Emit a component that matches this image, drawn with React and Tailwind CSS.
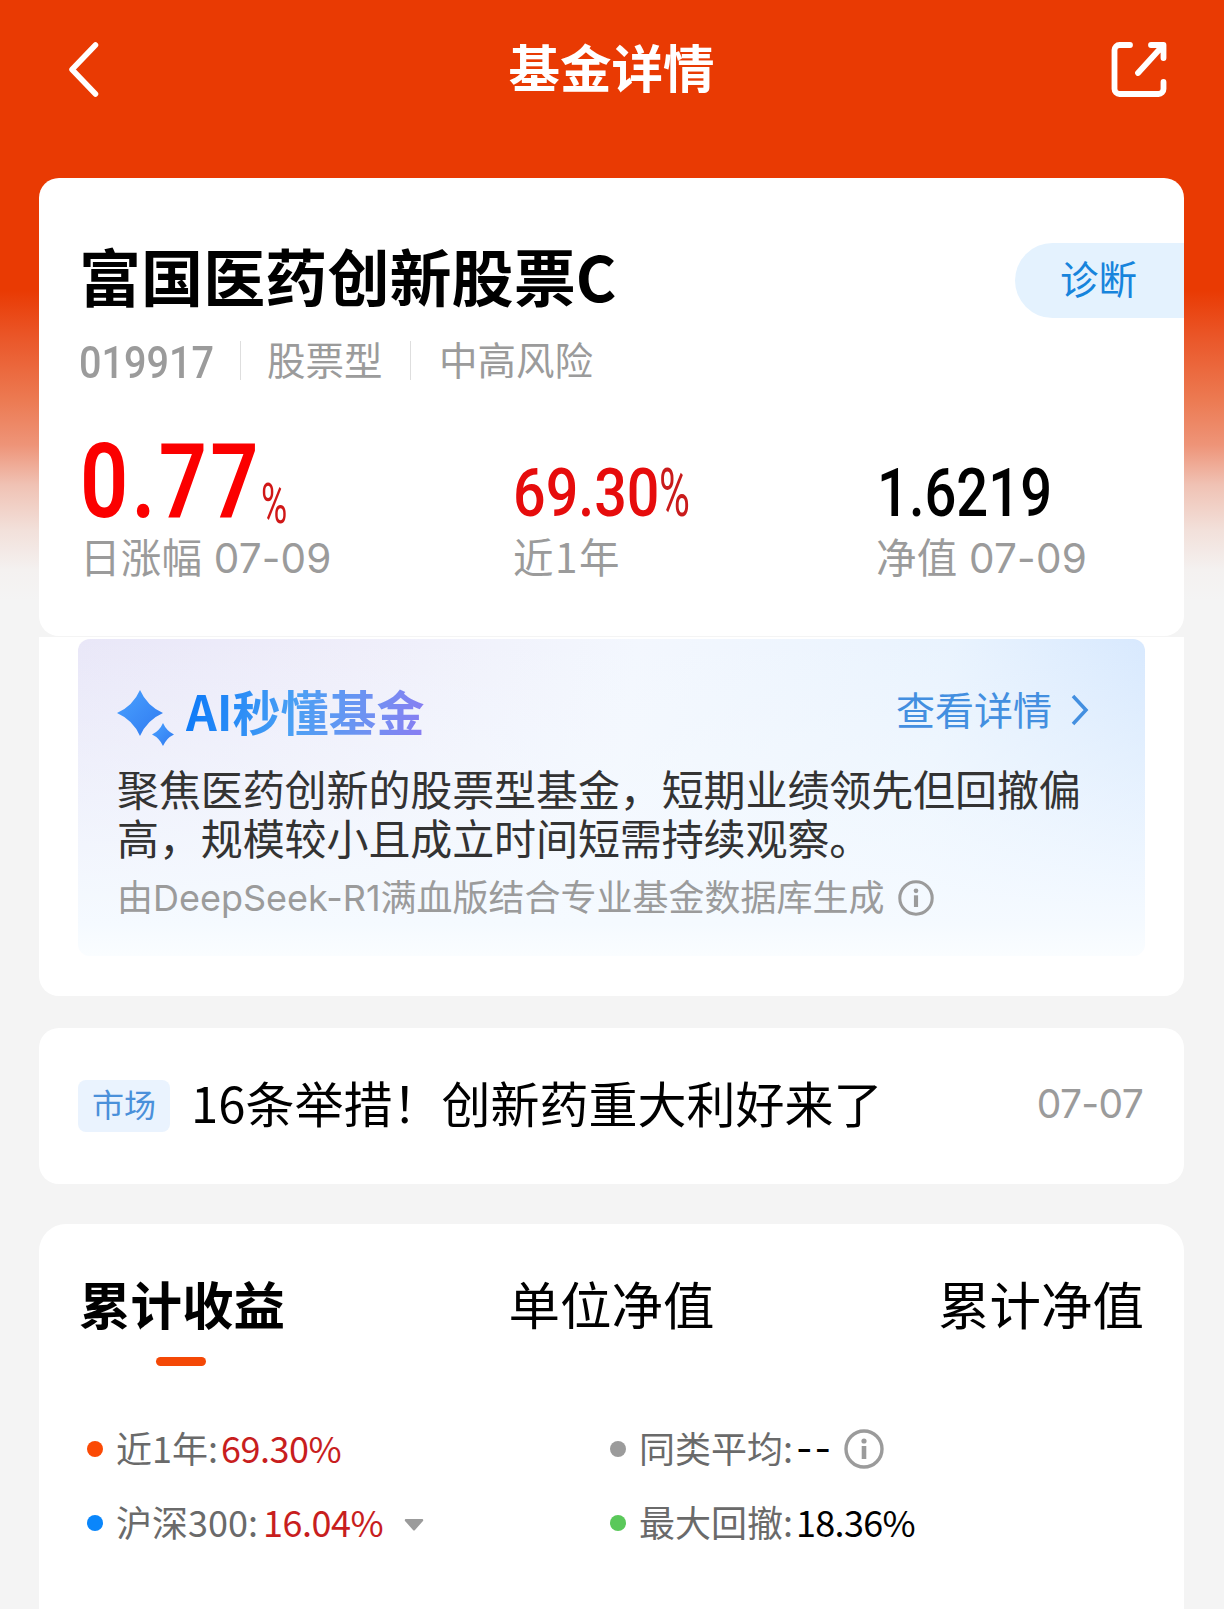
import React from 'react';

const InfoIcon = ({ className }) => (
  <svg viewBox="0 0 40 40" fill="none" className={className}>
    <circle cx="20" cy="20" r="18" stroke="#9b9b9b" strokeWidth="3.4" />
    <circle cx="20" cy="12" r="2.6" fill="#9b9b9b" />
    <path d="M20 17v13" stroke="#9b9b9b" strokeWidth="4.6" />
  </svg>
);

const Header = () => (
  <header className="h-[178px] px-[67px] pt-[41px] flex justify-between items-start text-white">
    <svg viewBox="0 0 32 58" fill="none" className="w-8 h-[58px]">
      <path d="M28.500 4 5 28.500 28.500 53" stroke="currentColor" strokeWidth="5.500" strokeLinecap="round" strokeLinejoin="round" />
    </svg>
    <h1 className="text-[51.500px] leading-[50px] font-bold ml-[14px]">基金详情</h1>
    <svg viewBox="0 0 58 58" fill="none" className="w-[58px] h-[58px] -mr-[11px]">
      <g stroke="currentColor" strokeWidth="5.800" strokeLinecap="round" strokeLinejoin="round">
        <path d="M20 4H9.500a5 5 0 0 0-5 5v39a5 5 0 0 0 5 5h39a5 5 0 0 0 5-5V41" />
        <path d="M41 4h12.500v13M53 4.500 28 32" />
      </g>
    </svg>
  </header>
);

const FundCard = () => (
  <section className="h-[458px] bg-white rounded-[20px] pt-[65px]">
    <div className="flex justify-between items-start">
      <h2 className="pl-10 pt-px text-[62px] leading-[62px] tracking-[0.1px] font-bold text-black">富国医药创新股票C</h2>
      <button className="w-[169px] h-[75px] pb-[7px] pl-[45px] text-left rounded-l-full bg-[#e4f2fe] text-[38.500px] leading-[68px] text-[#1784dc]">
        诊断
      </button>
    </div>

    {/* Mã quỹ, loại, mức rủi ro */}
    <div className="flex items-center h-10 pl-10 mt-[22px] text-[38.500px] leading-10 text-[#9b9b9b]">
      <span className="w-[161px] pt-1 shrink-0">
        <span className="inline-block origin-left scale-x-[.88] font-[Roboto] font-medium text-[45px] leading-10">019917</span>
      </span>
      <span className="w-px h-[39px] bg-[#dedede]" />
      <span className="pl-[26px] w-[169px] -mt-1">股票型</span>
      <span className="w-px h-[39px] bg-[#dedede]" />
      <span className="pl-7 -mt-1">中高风险</span>
    </div>

    {/* Số liệu chính */}
    <div className="flex pl-[41px] mt-[54px] text-[40.500px] text-[#9b9b9b]">
      <div className="w-[433px]">
        <div className="h-[105px] flex items-start text-[#fb0000] font-[Roboto]">
          <span className="w-[181px] shrink-0">
            <span className="inline-block origin-left scale-x-[.82] font-semibold text-[103px] leading-[95px] tracking-[4px]">0.77</span>
          </span>
          <span className="origin-left scale-x-[.64] text-[56px] leading-[40px] pt-[50px] text-[#d01717]">%</span>
        </div>
        <p className="leading-10 tracking-[0.2px] font-[Inter,'Noto_Sans_CJK_SC',sans-serif]">日涨幅 07-09</p>
      </div>
      <div className="w-[364px]">
        <div className="h-[105px] pt-[30px] flex text-[#e60c0c] font-[Roboto] text-[66px] leading-[60px]">
          <span className="w-[146px] shrink-0">
            <span className="inline-block origin-left scale-x-[.87] font-medium">69.30</span>
          </span>
          <span className="origin-left scale-x-[.64] text-[#c91b1b]">%</span>
        </div>
        <p className="-mt-[3px] leading-10 tracking-[1.5px]">近1年</p>
      </div>
      <div>
        <div className="h-[105px] pt-[30px] text-black font-[Roboto] text-[66px] leading-[60px]">
          <span className="inline-block origin-left scale-x-[.85] font-medium">1.6219</span>
        </div>
        <p className="-ml-px leading-10 tracking-[0.2px] font-[Inter,'Noto_Sans_CJK_SC',sans-serif]">净值 07-09</p>
      </div>
    </div>
  </section>
);

const AiCard = () => (
  <section className="mt-px h-[359px] px-[39px] pt-0.5 bg-white rounded-b-[20px]">
    <div className="h-[317px] rounded-xl px-[39px] pt-[51px] bg-[linear-gradient(to_bottom,transparent_0%,#f5faff_90%,#fafdff_100%),linear-gradient(100deg,#e9e7f8_0%,#efeefa_25%,#f3f7fe_50%,#e9f3fe_78%,#d3e6fe_100%)]">
      <div className="flex items-start h-[58px]">
        <svg viewBox="0 0 58 56" className="w-[58px] h-14 shrink-0">
          <defs>
            <linearGradient id="spark" x1="0" y1="0" x2="1" y2="1">
              <stop offset="0" stopColor="#4aa2ff" />
              <stop offset="1" stopColor="#2f79f0" />
            </linearGradient>
          </defs>
          <path d="M23 0Q30 16 46 23Q30 30 23 46Q16 30 0 23Q16 16 23 0Z" fill="url(#spark)" />
          <path d="M46 33Q49.500 41 57 44.500Q49.500 48 46 56Q42.500 48 35 44.500Q42.500 41 46 33Z" fill="url(#spark)" />
        </svg>
        <h3 className="ml-[11px] -mt-[13px] text-[48px] leading-[66px] font-bold text-transparent bg-clip-text bg-[linear-gradient(100deg,#0a78f8_0%,#4aa0f4_45%,#6f92f2_75%,#8a7cf2_100%)]">
          AI秒懂基金
        </h3>
        <a className="ml-auto mr-[17px] flex items-center text-[39px] leading-[36px] text-[#438fe0]">
          查看详情
          <svg viewBox="0 0 18 32" fill="none" className="w-[18px] h-8 ml-[19px] mt-1">
            <path d="M2 2 15 16 2 30" stroke="currentColor" strokeWidth="3.500" />
          </svg>
        </a>
      </div>
      <p className="mt-[15px] -mr-4 text-[42px] leading-[49px] tracking-[-0.1px] text-[#333]">
        聚焦医药创新的股票型基金，短期业绩领先但回撤偏
        <br />
        高，规模较小且成立时间短需持续观察。
      </p>
      <div className="flex items-center h-9 mt-[19px] text-[36px] leading-9 text-[#9b9b9b]">
        <span className="font-[Inter,'Noto_Sans_CJK_SC',sans-serif]">由DeepSeek-R1满血版结合专业基金数据库生成</span>
        <InfoIcon className="w-9 h-9 ml-[13px]" />
      </div>
    </div>
  </section>
);

const News = () => (
  <section className="mt-8 h-[156px] bg-white rounded-[20px] px-[39px] flex items-center">
    <span className="w-[92px] h-[52px] rounded-lg bg-[#eaf3fe] text-[#4a90da] text-[32px] leading-[46px] text-center">市场</span>
    <p className="ml-[21px] -mt-2 text-[49px] leading-[56px] text-black">16条举措！创新药重大利好来了</p>
    <time className="ml-auto -mt-1 mr-0.5 text-[39px] leading-10 tracking-[-0.7px] text-[#9b9b9b] font-[Inter]">07-07</time>
  </section>
);

const legends = [
  { dot: 'bg-[#fb4a05]', label: '近1年:', value: '69.30%', color: 'text-[#c81e1e] tracking-[-0.5px]' },
  { dot: 'bg-[#9b9b9b]', label: '同类平均:', value: '--', color: 'pt-1 text-black font-[Inter] tracking-[2px]', info: true },
  { dot: 'bg-[#0a86fb]', label: '沪深300:', value: '16.04%', color: 'pl-0.5 text-[#c81e1e] tracking-[-0.5px]', arrow: true },
  { dot: 'bg-[#5ac85a]', label: '最大回撤:', value: '18.36%', color: 'text-black tracking-[-0.7px]' },
];

const Performance = () => (
  <section className="mt-10 h-[385px] bg-white rounded-t-[27px] px-10 pt-[51px]">
    <div className="flex justify-between text-[51.500px] leading-[56px] text-black">
      <div className="font-bold">
        累计收益
        <div className="mt-[26px] ml-[77px] w-[50px] h-[9px] rounded-full bg-[#f44806]" />
      </div>
      <div>单位净值</div>
      <div>累计净值</div>
    </div>

    {/* Chú thích */}
    <div className="mt-[46px] grid grid-cols-[523px_1fr] text-[36px] leading-[70px]">
      {legends.map((item) => (
        <div key={item.label} className="flex items-center h-[74px] pl-2">
          <span className={`w-4 h-4 mr-[13px] rounded-full ${item.dot}`} />
          <span className="-mt-1 text-[#6a6a6a]">{item.label}</span>
          <span className={`-mt-1 ml-[3px] ${item.color}`}>{item.value}</span>
          {item.info && <InfoIcon className="w-10 h-10 ml-[11px]" />}
          {item.arrow && (
            <svg viewBox="0 0 20 12" className="w-5 h-3 ml-[21px] mt-1">
              <path d="M1.500 0h17q1.500 1 0 2.500L11 11q-1 1-2 0L1.500 2.500Q0 1 1.500 0Z" fill="#9b9b9b" />
            </svg>
          )}
        </div>
      ))}
    </div>
  </section>
);

const App = () => {
  return (
    <div className="w-[1224px] h-[1609px] overflow-hidden bg-[#f4f4f4] bg-[linear-gradient(to_bottom,#e93a03_0px,#e93a03_290px,#ea5527_335px,#ec7a52_400px,#ee9478_445px,#f0c2b4_485px,#f2e0da_530px,#f4f1f0_570px,#f4f4f4_600px)] font-['Noto_Sans_CJK_SC',sans-serif]">
      <Header />
      <main className="ml-[39px] w-[1145px]">
        <FundCard />
        <AiCard />
        <News />
        <Performance />
      </main>
    </div>
  );
};

export default App;
